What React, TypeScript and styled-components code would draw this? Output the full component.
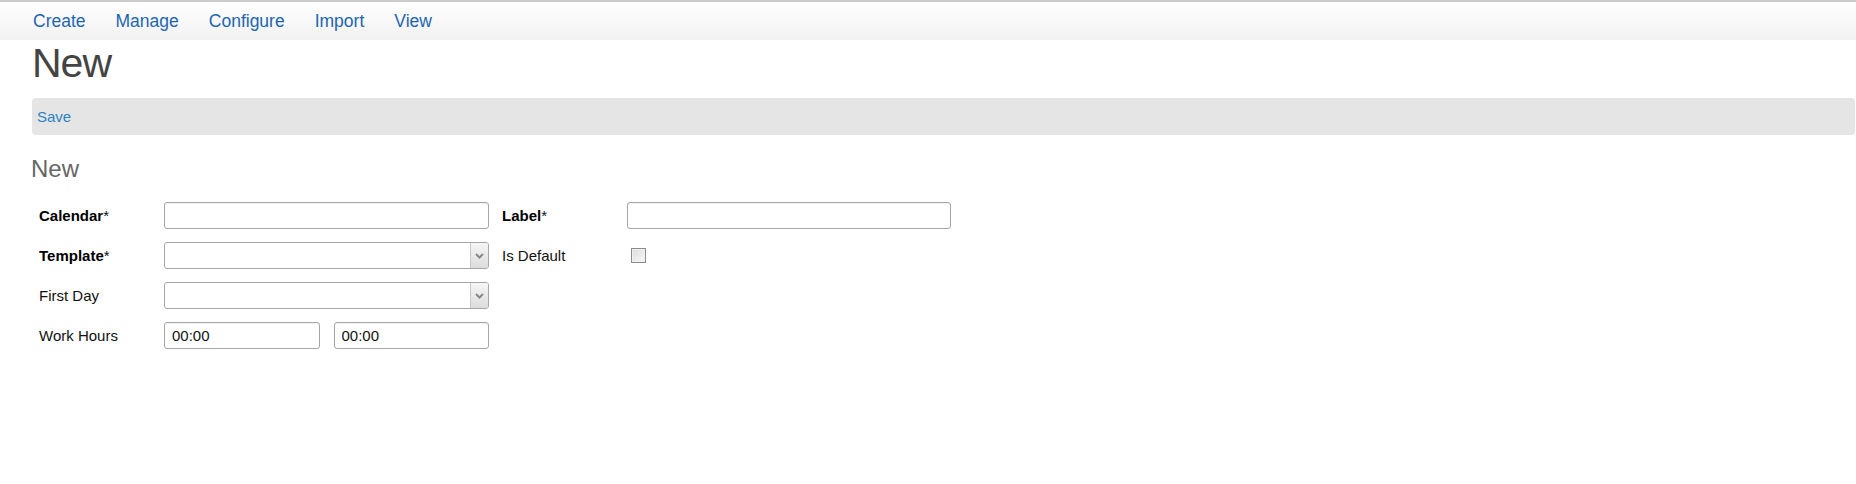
import React from "react";
import styled, { createGlobalStyle } from "styled-components";

const GlobalStyle = createGlobalStyle`
  body {
    margin: 0;
    font-family: "Liberation Sans", Arial, sans-serif;
    background: #fff;
  }
`;

const navItems = ["Create", "Manage", "Configure", "Import", "View"];

const App = () => {
  return (
    <>
      <GlobalStyle />
      <NavBar>
        {navItems.map((item) => (
          <NavLink key={item}>{item}</NavLink>
        ))}
      </NavBar>
      <Page>
        <Title>New</Title>
        <ActionBar>
          <ActionLink>Save</ActionLink>
        </ActionBar>
        <SubTitle>New</SubTitle>
        <Form>
          <Label>
            <b>Calendar</b>*
          </Label>
          <TextInput />
          <Label $second>
            <b>Label</b>*
          </Label>
          <TextInput />

          <Label>
            <b>Template</b>*
          </Label>
          <Select />
          <Label $second>Is Default</Label>
          <CheckCell>
            <CheckBox />
          </CheckCell>

          <Label>First Day</Label>
          <Select />
          <Label $second />
          <div />

          <Label>Work Hours</Label>
          <HoursPair>
            <TextInput value="00:00" readOnly />
            <TextInput value="00:00" readOnly />
          </HoursPair>
        </Form>
      </Page>
    </>
  );
};

const Select = () => (
  <SelectBox>
    <SelectValue />
    <SelectButton>
      <svg width="9" height="6" viewBox="0 0 9 6">
        <path d="M1 1 L4.5 4.5 L8 1" fill="none" stroke="#8a8a8a" strokeWidth="2" />
      </svg>
    </SelectButton>
  </SelectBox>
);

export default App;

const NavBar = styled.div`
  border-top: 2px solid #cccccc;
  height: 38px;
  background: linear-gradient(#ffffff, #f1f1f1);
  display: flex;
  align-items: center;
  padding-left: 18px;
`;

const NavLink = styled.a`
  padding: 0 15px;
  font-size: 17.5px;
  line-height: 38px;
  color: #1d65b1;
  cursor: pointer;
`;

const Page = styled.div`
  padding-left: 32px;
  padding-right: 1px;
`;

const Title = styled.h1`
  margin: 1px 0 0 0;
  font-size: 41px;
  line-height: 44px;
  font-weight: normal;
  letter-spacing: -1px;
  color: #444444;
`;

const ActionBar = styled.div`
  margin-top: 13px;
  height: 37px;
  background: #e5e5e5;
  border-radius: 4px;
  display: flex;
  align-items: center;
  padding-left: 5px;
`;

const ActionLink = styled.a`
  font-size: 15px;
  color: #2a83c3;
  cursor: pointer;
`;

const SubTitle = styled.h2`
  margin: 19px 0 0 -1px;
  font-size: 24px;
  line-height: 30px;
  font-weight: normal;
  color: #666666;
`;

const Form = styled.div`
  margin-top: 18px;
  padding-left: 7px;
  display: grid;
  grid-template-columns: 125px 325px 138px 324px;
  grid-auto-rows: 27px;
  row-gap: 13px;
  align-items: center;
`;

const Label = styled.div<{ $second?: boolean }>`
  font-size: 15px;
  color: #111111;
  padding-left: ${(p) => (p.$second ? "13px" : "0")};

  b {
    color: #000000;
  }
`;

const TextInput = styled.input`
  box-sizing: border-box;
  width: 100%;
  height: 27px;
  border: 1px solid #a6a6a6;
  border-radius: 3px;
  box-shadow: inset 0 1px 1px rgba(0, 0, 0, 0.06);
  padding: 0 7px;
  font-family: "Liberation Sans", Arial, sans-serif;
  font-size: 15px;
  color: #111;
  outline: none;
`;

const SelectBox = styled.div`
  box-sizing: border-box;
  height: 27px;
  border: 1px solid #a6a6a6;
  border-radius: 3px;
  display: flex;
  overflow: hidden;
  background: #fff;
`;

const SelectValue = styled.div`
  flex: 1;
`;

const SelectButton = styled.div`
  width: 17px;
  border-left: 1px solid #c8c8c8;
  background: linear-gradient(#f6f6f6, #dcdcdc);
  display: flex;
  align-items: center;
  justify-content: center;
`;

const CheckCell = styled.div`
  display: flex;
  align-items: center;
  padding-left: 4px;
`;

const CheckBox = styled.div`
  box-sizing: border-box;
  width: 15px;
  height: 15px;
  border: 1px solid #8c8c8c;
  background: linear-gradient(135deg, #dcdcdc, #f8f8f8);
  box-shadow: inset 0 0 0 1px #f0f0f0;
`;

const HoursPair = styled.div`
  display: flex;
  gap: 14px;
`;
